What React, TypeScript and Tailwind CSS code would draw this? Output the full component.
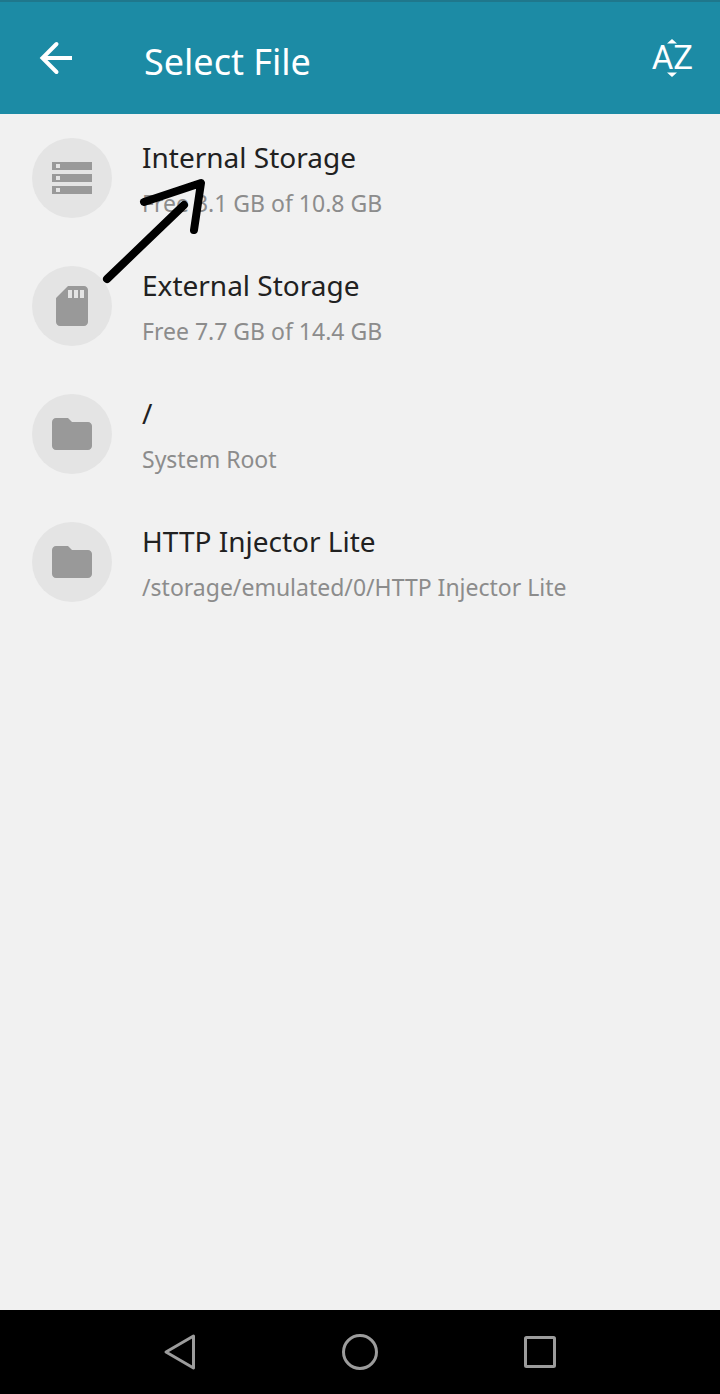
type IconProps = { className?: string };

function StorageIcon({ className }: IconProps) {
  return (
    <svg viewBox="0 0 24 24" className={className} fill="currentColor" aria-hidden="true">
      <path d="M2 20h20v-4H2v4zm2-3h2v2H4v-2zM2 4v4h20V4H2zm4 3H4V5h2v2zm-4 7h20v-4H2v4zm2-3h2v2H4v-2z" />
    </svg>
  );
}

function SdCardIcon({ className }: IconProps) {
  return (
    <svg viewBox="0 0 24 24" className={className} fill="currentColor" aria-hidden="true">
      <path d="M18 2h-8L4.02 8 4 20c0 1.1.9 2 2 2h12c1.1 0 2-.9 2-2V4c0-1.1-.9-2-2-2zm-6 6h-2V4h2v4zm3 0h-2V4h2v4zm3 0h-2V4h2v4z" />
    </svg>
  );
}

function FolderIcon({ className }: IconProps) {
  return (
    <svg viewBox="0 0 24 24" className={className} fill="currentColor" aria-hidden="true">
      <path d="M10 4H4c-1.1 0-1.99.9-1.99 2L2 18c0 1.1.9 2 2 2h16c1.1 0 2-.9 2-2V8c0-1.1-.9-2-2-2h-8l-2-2z" />
    </svg>
  );
}

const locations = [
  { title: "Internal Storage", detail: "Free 3.1 GB of 10.8 GB", Icon: StorageIcon },
  { title: "External Storage", detail: "Free 7.7 GB of 14.4 GB", Icon: SdCardIcon },
  { title: "/", detail: "System Root", Icon: FolderIcon },
  { title: "HTTP Injector Lite", detail: "/storage/emulated/0/HTTP Injector Lite", Icon: FolderIcon },
];

export default function App() {
  return (
    <div className="flex min-h-screen flex-col bg-[#f1f1f1] font-['Noto_Sans',sans-serif]">
      <header className="flex h-[114px] items-center border-t-2 border-[#1f778c] bg-[#1c8ba5] pr-[27px] pl-8 text-white">
        <button type="button" aria-label="Back" className="size-12">
          <svg viewBox="0 0 48 48" className="size-12" fill="none" stroke="currentColor" strokeWidth="4" aria-hidden="true">
            <path d="M40 24H11" />
            <path d="M24.500 10L10.500 24L24.500 38" strokeLinecap="round" />
          </svg>
        </button>
        <h1 className="ml-16 flex-1 pt-2 text-[36px] leading-12">Select File</h1>
        <button type="button" aria-label="Sort A to Z" className="flex flex-col items-center">
          <svg viewBox="0 0 10 5" className="h-[5px] w-[10px]" fill="currentColor" aria-hidden="true">
            <path d="M5 0l5 4.500H0z" />
          </svg>
          <span className="text-[33px] leading-7 [font-family:Roboto,sans-serif]">AZ</span>
          <svg viewBox="0 0 10 5" className="h-[5px] w-[10px]" fill="currentColor" aria-hidden="true">
            <path d="M5 5L0 .500h10z" />
          </svg>
        </button>
      </header>

      <main className="relative flex-1">
        <ul>
          {locations.map(({ title, detail, Icon }) => (
            <li key={title}>
              <button type="button" className="flex h-32 w-full items-center gap-[30px] px-8 text-left">
                <span className="flex size-20 shrink-0 items-center justify-center rounded-full bg-[#e4e4e4] text-[#999999]">
                  <Icon className="size-12" />
                </span>
                <span className="flex min-w-0 flex-col gap-[10px]">
                  <span className="text-[28px] leading-10 text-[#212121]">{title}</span>
                  <span className="text-[23px] leading-8 text-[#8c8c8c]">{detail}</span>
                </span>
              </button>
            </li>
          ))}
        </ul>
        <svg
          viewBox="0 0 112 112"
          className="pointer-events-none absolute top-[60px] left-[98px] size-28"
          fill="none"
          stroke="#000"
          strokeWidth="8"
          strokeLinecap="round"
          strokeLinejoin="round"
          aria-hidden="true"
        >
          <path d="M9 105L86 31M46 28L103 9L96 56" />
        </svg>
      </main>

      <nav aria-label="System" className="flex h-[84px] items-center justify-center gap-[132px] bg-black text-[#9c9c9c]">
        <button type="button" aria-label="Back" className="size-12">
          <svg viewBox="0 0 48 48" className="size-12" fill="none" stroke="currentColor" strokeWidth="3" strokeLinejoin="round" aria-hidden="true">
            <path d="M37.500 8L10 24L37.500 40z" />
          </svg>
        </button>
        <button type="button" aria-label="Home" className="size-12">
          <svg viewBox="0 0 48 48" className="size-12" fill="none" stroke="currentColor" strokeWidth="3" aria-hidden="true">
            <circle cx="24" cy="24" r="16.500" />
          </svg>
        </button>
        <button type="button" aria-label="Recent apps" className="size-12">
          <svg viewBox="0 0 48 48" className="size-12" fill="none" stroke="currentColor" strokeWidth="3" strokeLinejoin="round" aria-hidden="true">
            <rect x="9.500" y="9.500" width="29" height="29" rx="1" />
          </svg>
        </button>
      </nav>
    </div>
  );
}
